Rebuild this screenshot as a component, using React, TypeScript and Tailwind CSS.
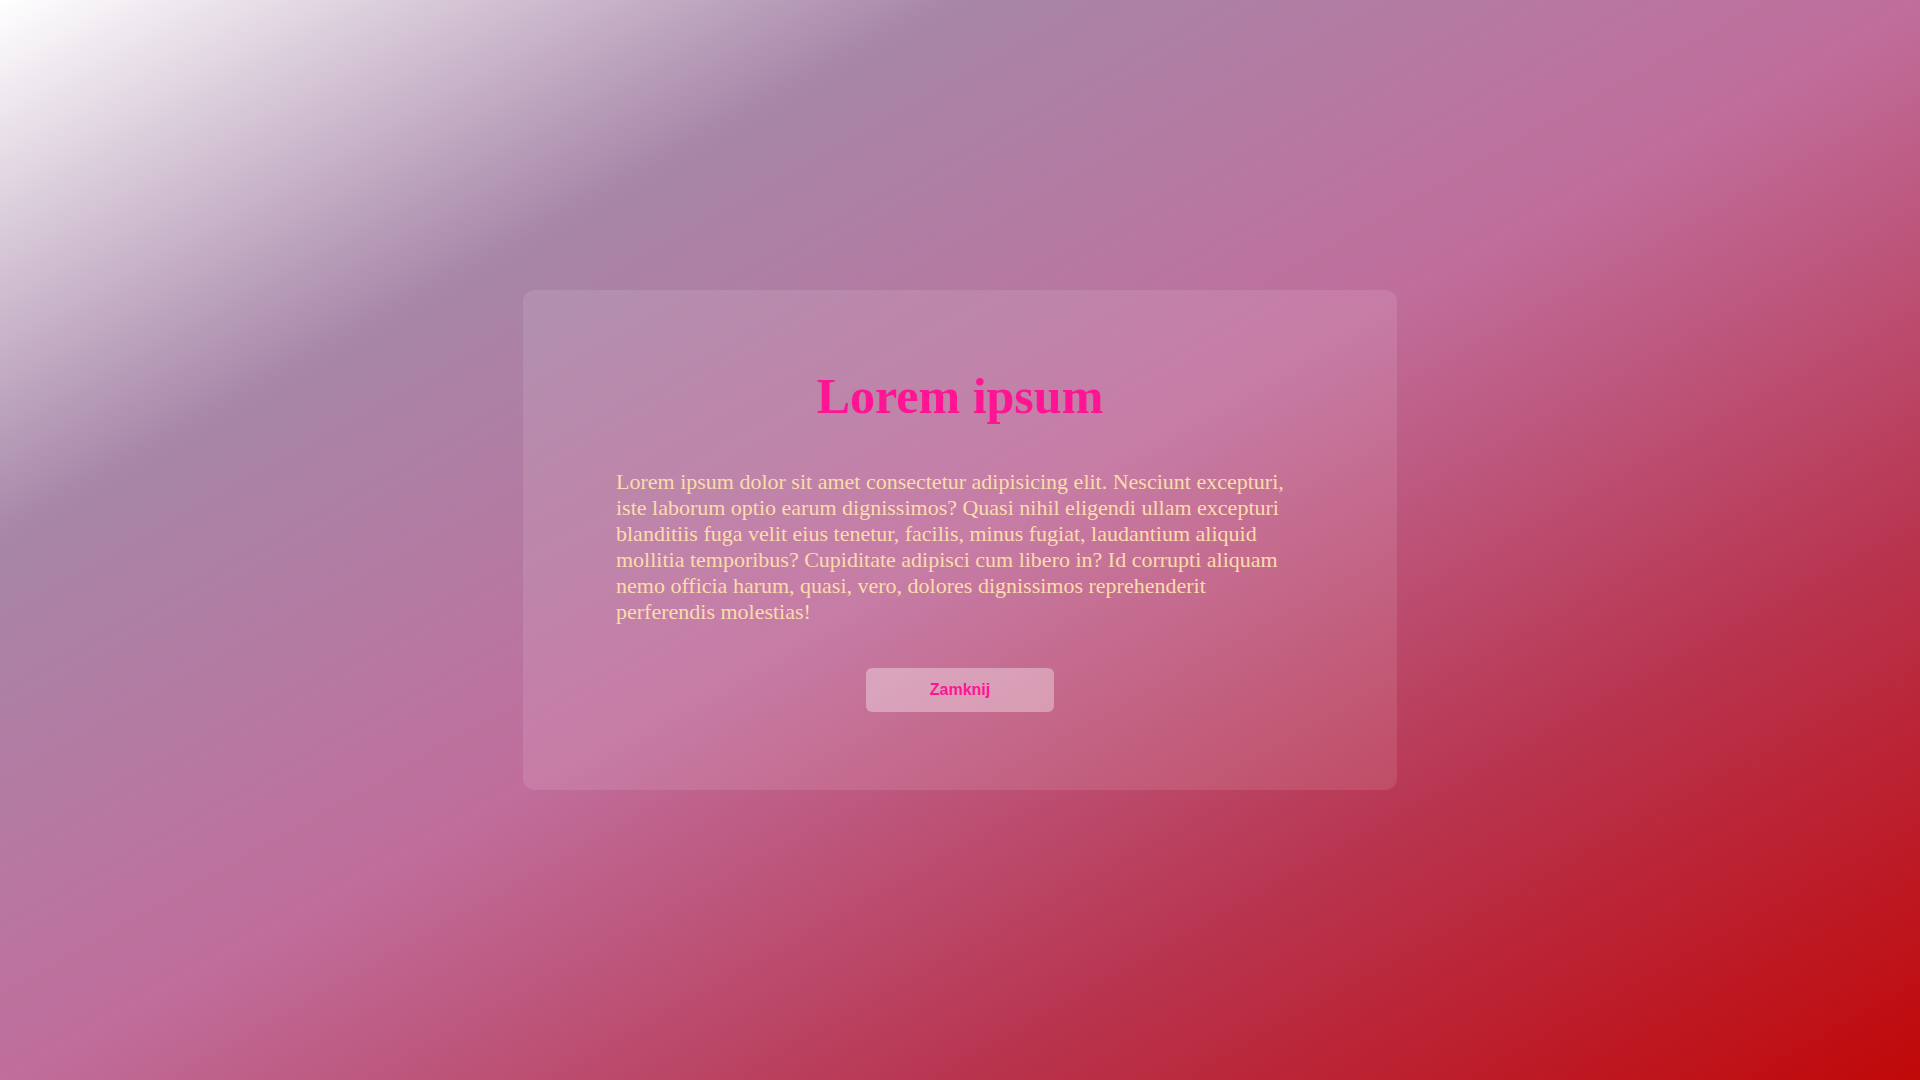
import React from "react"

const Modal = () => {
  return (
    <div className="flex w-[874px] flex-col items-center rounded-xl bg-white/10 pt-[78px] pb-[78px]">
      <h1 className="text-[50px] font-bold leading-[57.5px] text-[#ff1493] [font-family:'Liberation_Serif',serif]">
        Lorem ipsum
      </h1>
      <p className="mt-[43px] w-[688px] text-[22px] leading-[26px] text-[#fcdcab] [font-family:'Liberation_Serif',serif]">
        Lorem ipsum dolor sit amet consectetur adipisicing elit. Nesciunt excepturi, iste laborum
        optio earum dignissimos? Quasi nihil eligendi ullam excepturi blanditiis fuga velit eius
        tenetur, facilis, minus fugiat, laudantium aliquid mollitia temporibus? Cupiditate adipisci
        cum libero in? Id corrupti aliquam nemo officia harum, quasi, vero, dolores dignissimos
        reprehenderit perferendis molestias!
      </p>
      <button className="mt-[43px] flex h-[44px] w-[188px] items-center justify-center rounded-md bg-white/35 text-[16px] font-bold text-[#ff1493] [font-family:'Liberation_Sans',Arial,sans-serif]">
        Zamknij
      </button>
    </div>
  )
}

const App = () => {
  return (
    <main className="flex h-screen w-full items-center justify-center bg-[linear-gradient(to_bottom_right,#ffffff_0%,#a786a8_25%,#c06e9c_50%,#b8344e_75%,#c00808_100%)]">
      <Modal />
    </main>
  )
}

export default App
